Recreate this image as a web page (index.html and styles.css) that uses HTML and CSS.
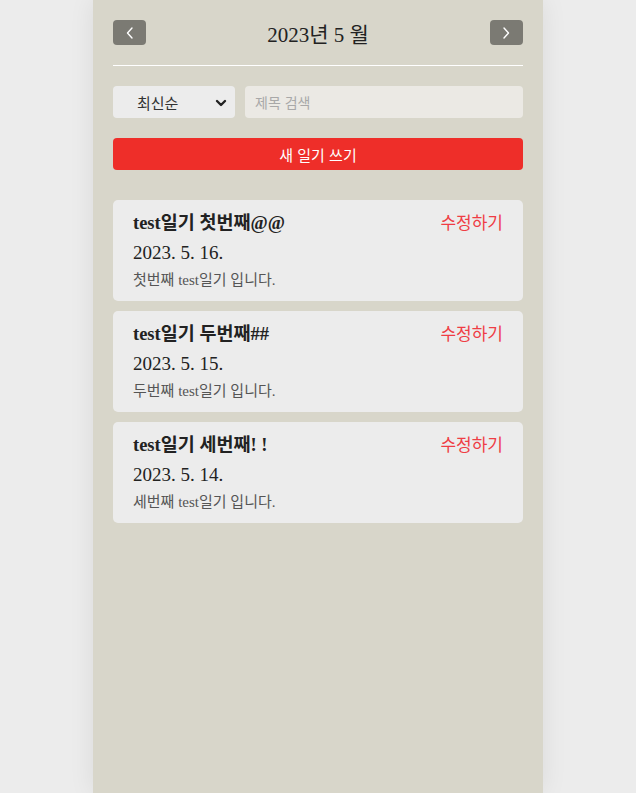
FILE: index.html
```html
<!DOCTYPE html>
<html lang="ko">
<head>
<meta charset="utf-8">
<title>일기장</title>
<link rel="stylesheet" href="styles.css">
</head>
<body>
<div class="app">
  <header class="header">
    <button class="nav-btn" aria-label="이전 달">
      <svg width="8" height="12" viewBox="0 0 8 12"><path d="M6 1 L1.5 6 L6 11" fill="none" stroke="#fff" stroke-width="1.4" stroke-linecap="round" stroke-linejoin="round"/></svg>
    </button>
    <div class="month">2023년 5 월</div>
    <button class="nav-btn" aria-label="다음 달">
      <svg width="8" height="12" viewBox="0 0 8 12"><path d="M2 1 L6.5 6 L2 11" fill="none" stroke="#fff" stroke-width="1.4" stroke-linecap="round" stroke-linejoin="round"/></svg>
    </button>
  </header>
  <div class="controls">
    <div class="sort-wrap">
      <select class="sort">
        <option>최신순</option>
        <option>오래된순</option>
      </select>
      <svg class="sort-arrow" width="12" height="8" viewBox="0 0 12 8"><path d="M2 2 L6 6 L10 2" fill="none" stroke="#222" stroke-width="2.4" stroke-linecap="round" stroke-linejoin="round"/></svg>
    </div>
    <input class="search" type="text" placeholder="제목 검색">
  </div>
  <button class="new-btn">새 일기 쓰기</button>
  <ul class="list">
    <li class="card">
      <div class="card-top">
        <span class="card-title">test일기 첫번째@@</span>
        <span class="edit">수정하기</span>
      </div>
      <div class="date">2023. 5. 16.</div>
      <div class="content">첫번째 test일기 입니다.</div>
    </li>
    <li class="card">
      <div class="card-top">
        <span class="card-title">test일기 두번째##</span>
        <span class="edit">수정하기</span>
      </div>
      <div class="date">2023. 5. 15.</div>
      <div class="content">두번째 test일기 입니다.</div>
    </li>
    <li class="card">
      <div class="card-top">
        <span class="card-title">test일기 세번째! !</span>
        <span class="edit">수정하기</span>
      </div>
      <div class="date">2023. 5. 14.</div>
      <div class="content">세번째 test일기 입니다.</div>
    </li>
  </ul>
</div>
</body>
</html>
```
FILE: styles.css
```css
* { box-sizing: border-box; }
html, body { margin: 0; padding: 0; }
body {
  background: #ececec;
  font-family: "Liberation Serif", "Noto Sans CJK KR", serif;
  color: #222;
}
.app {
  width: 450px;
  min-height: 793px;
  margin: 0 auto;
  background: #d8d6ca;
  padding: 20px;
  box-shadow: 0 0 24px rgba(0,0,0,0.08);
}
.header {
  display: flex;
  align-items: center;
  justify-content: space-between;
  height: 25px;
  padding-bottom: 20px;
  border-bottom: 1px solid #ffffff;
  box-sizing: content-box;
}
.nav-btn {
  width: 33px;
  height: 25px;
  border: none;
  border-radius: 4px;
  background: #7b7a73;
  padding: 0;
  display: flex;
  align-items: center;
  justify-content: center;
}
.month {
  font-size: 21px;
  color: #222;
}
.controls {
  display: flex;
  gap: 10px;
  margin-top: 20px;
}
.sort-wrap {
  position: relative;
  width: 122px;
  height: 32px;
}
.sort {
  appearance: none;
  -webkit-appearance: none;
  width: 100%;
  height: 32px;
  border: none;
  border-radius: 4px;
  background: #ececec;
  font-family: "Noto Sans CJK KR", sans-serif;
  font-size: 15px;
  color: #333;
  padding: 0 4px 0 24px;
}
.sort-arrow {
  position: absolute;
  right: 8px;
  top: 13px;
  pointer-events: none;
}
.search {
  flex: 1;
  height: 32px;
  border: none;
  border-radius: 4px;
  background: #ebe9e4;
  font-family: "Noto Sans CJK KR", sans-serif;
  font-size: 14px;
  padding: 0 10px;
}
.search::placeholder { color: #a8a8a8; }
.new-btn {
  display: block;
  width: 100%;
  height: 32px;
  margin-top: 20px;
  border: none;
  border-radius: 4px;
  background: #ee2e29;
  color: #fff;
  font-family: "Noto Sans CJK KR", sans-serif;
  font-size: 15px;
}
.list {
  list-style: none;
  margin: 30px 0 0;
  padding: 0;
  display: flex;
  flex-direction: column;
  gap: 10px;
}
.card {
  background: #ececec;
  border-radius: 5px;
  height: 101px;
  padding: 8px 20px 0;
}
.card-top {
  display: flex;
  justify-content: space-between;
  align-items: baseline;
}
.card-title {
  font-weight: bold;
  font-size: 18.5px;
  color: #222;
}
.edit {
  font-size: 17px;
  color: #ef3d45;
}
.date {
  font-size: 19px;
  margin-top: 8px;
  color: #222;
}
.content {
  font-size: 15px;
  color: #555;
  margin-top: 4px;
}
```
